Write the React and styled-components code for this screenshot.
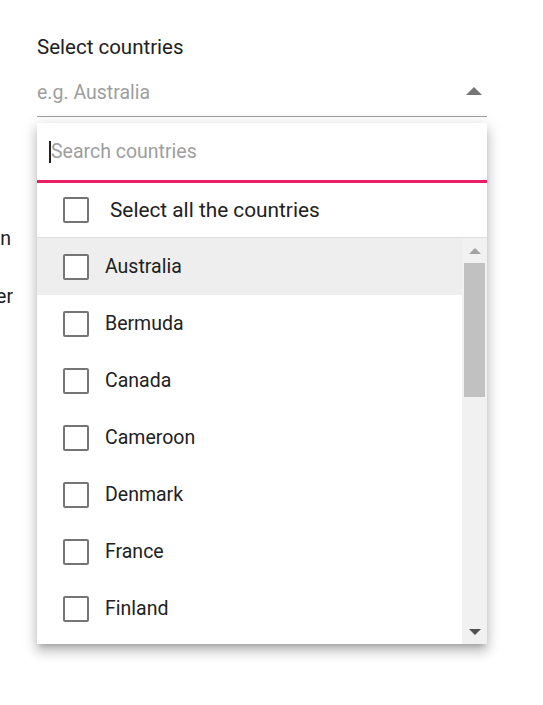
import React from "react";
import styled, { createGlobalStyle } from "styled-components";

const GlobalStyle = createGlobalStyle`
  body {
    margin: 0;
    background: #fff;
    font-family: Roboto, "Noto Sans", sans-serif;
    color: #212121;
  }
`;

const countries = [
  "Australia",
  "Bermuda",
  "Canada",
  "Cameroon",
  "Denmark",
  "France",
  "Finland",
  "Germany",
];

const App = () => {
  return (
    <Page>
      <GlobalStyle />
      <Field>
        <Label>Select countries</Label>
        <Control>
          <Placeholder>e.g. Australia</Placeholder>
          <Arrow />
          <Popup>
            <Search>
              <Caret />
              <SearchHint>Search countries</SearchHint>
            </Search>
            <SelectAll>
              <Box />
              <SelectAllText>Select all the countries</SelectAllText>
            </SelectAll>
            <ListArea>
              <List>
                {countries.map((c, i) => (
                  <Item key={c} $hover={i === 0}>
                    <Box />
                    <ItemText>{c}</ItemText>
                  </Item>
                ))}
              </List>
              <Scrollbar>
                <ScrollButton>
                  <UpTri />
                </ScrollButton>
                <Thumb />
                <Track />
                <ScrollButton>
                  <DownTri />
                </ScrollButton>
              </Scrollbar>
            </ListArea>
          </Popup>
        </Control>
      </Field>
      <Notes>
        <NoteLine $w={11}>Selection</NoteLine>
        <NoteLine $w={13}>Filter</NoteLine>
      </Notes>
    </Page>
  );
};

export default App;

const Page = styled.div`
  padding-top: 35px;
  width: 543px;
  height: 705px;
  overflow: hidden;
  box-sizing: border-box;
`;

const Field = styled.div`
  margin-left: 37px;
  width: 450px;
`;

const Label = styled.div`
  font-size: 20.5px;
  line-height: 24px;
  height: 24px;
`;

const Control = styled.div`
  position: relative;
  display: flex;
  align-items: flex-start;
  justify-content: space-between;
  padding: 22px 0 11px;
  border-bottom: 1px solid #9e9e9e;
`;

const Placeholder = styled.div`
  font-size: 19.5px;
  line-height: 24px;
  color: #9e9e9e;
`;

const Arrow = styled.div`
  width: 0;
  height: 0;
  margin: 6px 5px 0 0;
  border-left: 8px solid transparent;
  border-right: 8px solid transparent;
  border-bottom: 8px solid #757575;
`;

const Popup = styled.div`
  position: absolute;
  left: 0;
  top: calc(100% + 7px);
  width: 450px;
  background: #fff;
  z-index: 2;
  box-shadow: 0 5px 5px -3px rgba(0, 0, 0, 0.2),
    0 8px 10px 1px rgba(0, 0, 0, 0.14), 0 3px 14px 2px rgba(0, 0, 0, 0.12);
`;

const Search = styled.div`
  display: flex;
  align-items: center;
  padding-left: 12px;
  border-bottom: 3px solid #e91e63;
  box-sizing: border-box;
  height: 60px;
`;

const Caret = styled.span`
  width: 2px;
  height: 22px;
  background: #212121;
`;

const SearchHint = styled.span`
  font-size: 19.5px;
  color: #9e9e9e;
`;

const SelectAll = styled.div`
  height: 54px;
  display: flex;
  align-items: center;
  padding-left: 26px;
  gap: 21px;
  border-bottom: 1px solid #e0e0e0;
`;

const SelectAllText = styled.span`
  font-size: 20.8px;
`;

const Box = styled.span`
  width: 22px;
  height: 22px;
  border: 2px solid #757575;
  border-radius: 2px;
  background: #fff;
  flex-shrink: 0;
`;

const ListArea = styled.div`
  display: flex;
  height: 406px;
`;

const List = styled.div`
  flex: 1;
  overflow: hidden;
`;

const Item = styled.div`
  height: 57px;
  display: flex;
  align-items: center;
  padding-left: 26px;
  gap: 16px;
  background: ${(p) => (p.$hover ? "#eeeeee" : "#fff")};
`;

const ItemText = styled.span`
  font-size: 19.5px;
`;

const Scrollbar = styled.div`
  width: 25px;
  background: #f1f1f1;
  display: flex;
  flex-direction: column;
  align-items: center;
`;

const ScrollButton = styled.div`
  height: 25px;
  width: 100%;
  display: flex;
  align-items: center;
  justify-content: center;
`;

const UpTri = styled.span`
  width: 0;
  height: 0;
  border-left: 6px solid transparent;
  border-right: 6px solid transparent;
  border-bottom: 6px solid #a3a3a3;
`;

const DownTri = styled.span`
  width: 0;
  height: 0;
  border-left: 6px solid transparent;
  border-right: 6px solid transparent;
  border-top: 6px solid #505050;
`;

const Thumb = styled.div`
  width: 21px;
  height: 134px;
  background: #c1c1c1;
`;

const Track = styled.div`
  flex: 1;
`;

const Notes = styled.div`
  margin-top: 110px;
  display: flex;
  flex-direction: column;
  gap: 34px;
`;

const NoteLine = styled.div`
  width: ${(p) => p.$w}px;
  direction: rtl;
  white-space: nowrap;
  overflow: hidden;
  font-size: 19.5px;
  line-height: 24px;
`;
